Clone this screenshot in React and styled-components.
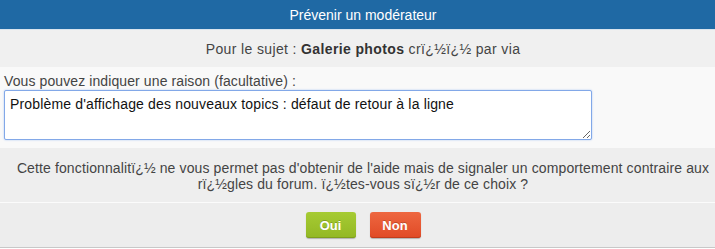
import React from "react";
import styled, { createGlobalStyle } from "styled-components";

const Global = createGlobalStyle`
  html, body { margin: 0; padding: 0; background: #fff; overflow: hidden; }
  body { font-family: "Liberation Sans", Arial, sans-serif; font-size: 14px; color: #444; }
`;

const Dialog = styled.div`
  width: 726px;
  display: flex;
  flex-direction: column;
  border-bottom: 1px solid #c8c8c8;
`;

const Header = styled.div`
  height: 29px;
  background: #1f69a4;
  color: #fff;
  font-size: 14px;
  display: flex;
  align-items: center;
  justify-content: center;
  border-bottom: 1px solid #d8e4ee;
`;

const Subject = styled.div`
  height: 37px;
  background: #f0f0f0;
  display: flex;
  align-items: center;
  justify-content: center;
  color: #444;
  letter-spacing: 0.37px;
  b { color: #333; }
`;

const Reason = styled.div`
  background: #f9f9f9;
  padding: 6px 4px 8px;
  display: flex;
  flex-direction: column;
  gap: 1px;
`;

const Label = styled.label`
  color: #444;
  line-height: 16px;
  letter-spacing: 0.1px;
`;

const Area = styled.textarea`
  box-sizing: border-box;
  width: 588px;
  height: 50px;
  margin: 0;
  padding: 5px 5px;
  font-family: "Liberation Sans", Arial, sans-serif;
  font-size: 14px;
  letter-spacing: 0.16px;
  color: #111;
  background: #fff;
  border: 1px solid #82a8e8;
  border-radius: 2px;
  box-shadow: 0 0 2px #a8c4f2;
  outline: none;
`;

const Notice = styled.div`
  background: #eeeeee;
  padding: 12px 10px 10px;
  text-align: center;
  line-height: 16px;
  letter-spacing: 0.12px;
  color: #444;
  border-bottom: 1px solid #fbfbfb;
`;

const Actions = styled.div`
  background: #ededed;
  padding: 9px 0 9px;
  display: flex;
  justify-content: center;
  gap: 14px;
`;

const Button = styled.button`
  height: 26px;
  width: ${(p) => p.$w}px;
  padding: 0;
  border: none;
  border-radius: 3px;
  font-family: "Liberation Sans", Arial, sans-serif;
  font-weight: bold;
  font-size: 13px;
  color: #fff;
  text-shadow: 0 -1px 0 rgba(0,0,0,0.2);
  background: ${(p) => p.$bg};
  box-shadow: 0 1px 1px rgba(0,0,0,0.25), inset 0 -1px 0 ${(p) => p.$edge};
  cursor: pointer;
`;

export default function App() {
  return (
    <>
      <Global />
      <Dialog>
        <Header>Prévenir un modérateur</Header>
        <Subject>
          <span>
            Pour le sujet : <b>Galerie photos</b> crï¿½ï¿½ par via
          </span>
        </Subject>
        <Reason>
          <Label htmlFor="raison">Vous pouvez indiquer une raison (facultative) :</Label>
          <Area
            id="raison"
            defaultValue="Problème d'affichage des nouveaux topics : défaut de retour à la ligne"
          />
        </Reason>
        <Notice>
          Cette fonctionnalitï¿½ ne vous permet pas d'obtenir de l'aide mais de signaler un comportement contraire aux rï¿½gles du forum. ï¿½tes-vous sï¿½r de ce choix ?
        </Notice>
        <Actions>
          <Button $w={50} $bg="linear-gradient(#a6cb33, #93b824)" $edge="#7f9f1c">Oui</Button>
          <Button $w={51} $bg="linear-gradient(#ee6740, #e14a26)" $edge="#c23c1c">Non</Button>
        </Actions>
      </Dialog>
    </>
  );
}
